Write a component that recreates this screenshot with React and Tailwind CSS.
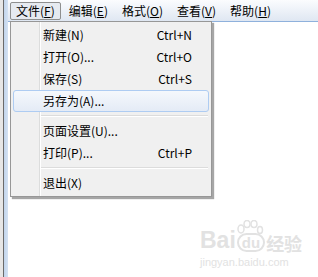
const menus = [
  { label: '文件', key: 'F', open: true },
  { label: '编辑', key: 'E' },
  { label: '格式', key: 'O' },
  { label: '查看', key: 'V' },
  { label: '帮助', key: 'H' },
];

const items = [
  { label: '新建(N)', shortcut: 'Ctrl+N' },
  { label: '打开(O)...', shortcut: 'Ctrl+O' },
  { label: '保存(S)', shortcut: 'Ctrl+S' },
  { label: '另存为(A)...', active: true },
  { sep: true },
  { label: '页面设置(U)...' },
  { label: '打印(P)...', shortcut: 'Ctrl+P' },
  { sep: true },
  { label: '退出(X)' },
];

const font = { fontFamily: '"Noto Sans CJK SC", "Noto Sans", sans-serif' };
const latin = { fontFamily: 'Arial, "Liberation Sans", sans-serif' };

function MenuBar() {
  return (
    <div className="h-[22px] flex items-center pl-[2px] gap-[2px] bg-gradient-to-b from-[#fbfcfe] to-[#dfe7f2] border-b border-[#8fb1dc] text-[12px] text-black">
      {menus.map((m) => (
        <div
          key={m.label}
          className={`h-[18px] px-[5px] flex items-center rounded-[2px] border ${
            m.open ? 'border-[#8e8f8f] bg-[#e6eaf0]' : 'border-transparent'
          }`}
        >
          {m.label}(<span className="underline">{m.key}</span>)
        </div>
      ))}
    </div>
  );
}

function Dropdown() {
  return (
    <div className="absolute left-[2px] top-[21px] w-[202px] bg-[#f0f0f0] border border-[#979797] shadow-[2px_2px_1px_rgba(0,0,0,0.35)] py-[2px] text-[12px] text-black">
      <div className="absolute left-[28px] top-0 bottom-0 flex">
        <div className="w-px bg-[#dcdddd]" />
        <div className="w-px bg-white" />
      </div>
      {items.map((it, i) =>
        it.sep ? (
          <div key={i} className="h-[8px] flex items-center">
            <div className="w-[30px] shrink-0" />
            <div className="flex-1 mr-[3px] flex flex-col">
              <div className="h-px bg-[#dcdcdc]" />
              <div className="h-px bg-white" />
            </div>
          </div>
        ) : (
          <div key={i} className="px-[2px] relative">
            <div
              className={`h-[22px] flex items-center rounded-[3px] border ${
                it.active
                  ? 'border-[#aeccf2] bg-gradient-to-b from-[#f5f8fc] to-[#e4ebf6]'
                  : 'border-transparent'
              }`}
            >
              <div className="w-[29px] shrink-0" />
              <span className="flex-1">{it.label}</span>
              {it.shortcut && <span className="mr-[16px]">{it.shortcut}</span>}
            </div>
          </div>
        )
      )}
    </div>
  );
}

function Watermark() {
  return (
    <div className="absolute left-[192px] top-[229px] text-[#e2e2e2] select-none">
      <div className="flex items-end leading-none">
        <span className="text-[23px] font-bold" style={latin}>Bai</span>
        <span className="relative mx-[1px]">
          <svg width="30" height="26" viewBox="0 0 30 26" className="absolute left-[-2px] top-[-13px]">
            <g fill="none" stroke="#e2e2e2" strokeWidth="1.5">
              <ellipse cx="6" cy="9" rx="3" ry="4" />
              <ellipse cx="12" cy="4" rx="3" ry="3.5" />
              <ellipse cx="19" cy="4" rx="3" ry="3.5" />
              <ellipse cx="25" cy="10" rx="2.5" ry="3.5" />
            </g>
          </svg>
          <span className="text-[15px] font-bold border-2 border-[#e2e2e2] rounded-full px-[3px] inline-block" style={latin}>du</span>
        </span>
        <span className="text-[18px] font-bold" style={font}>经验</span>
      </div>
      <div className="text-[11px] mt-[5px] leading-none" style={latin}>jingyan.baidu.com</div>
    </div>
  );
}

export default function App() {
  return (
    <div className="w-[318px] h-[277px] flex bg-white overflow-hidden" style={font}>
      <div className="w-[3px] bg-[#e6e6e6]" />
      <div className="w-px bg-[#6a6a6a]" />
      <div className="w-[4px] bg-gradient-to-r from-[#c2d5ec] to-[#d4e2f3]" />
      <div className="flex-1 flex flex-col relative">
        <MenuBar />
        <div className="flex-1 bg-white" />
        <Dropdown />
        <Watermark />
      </div>
    </div>
  );
}
